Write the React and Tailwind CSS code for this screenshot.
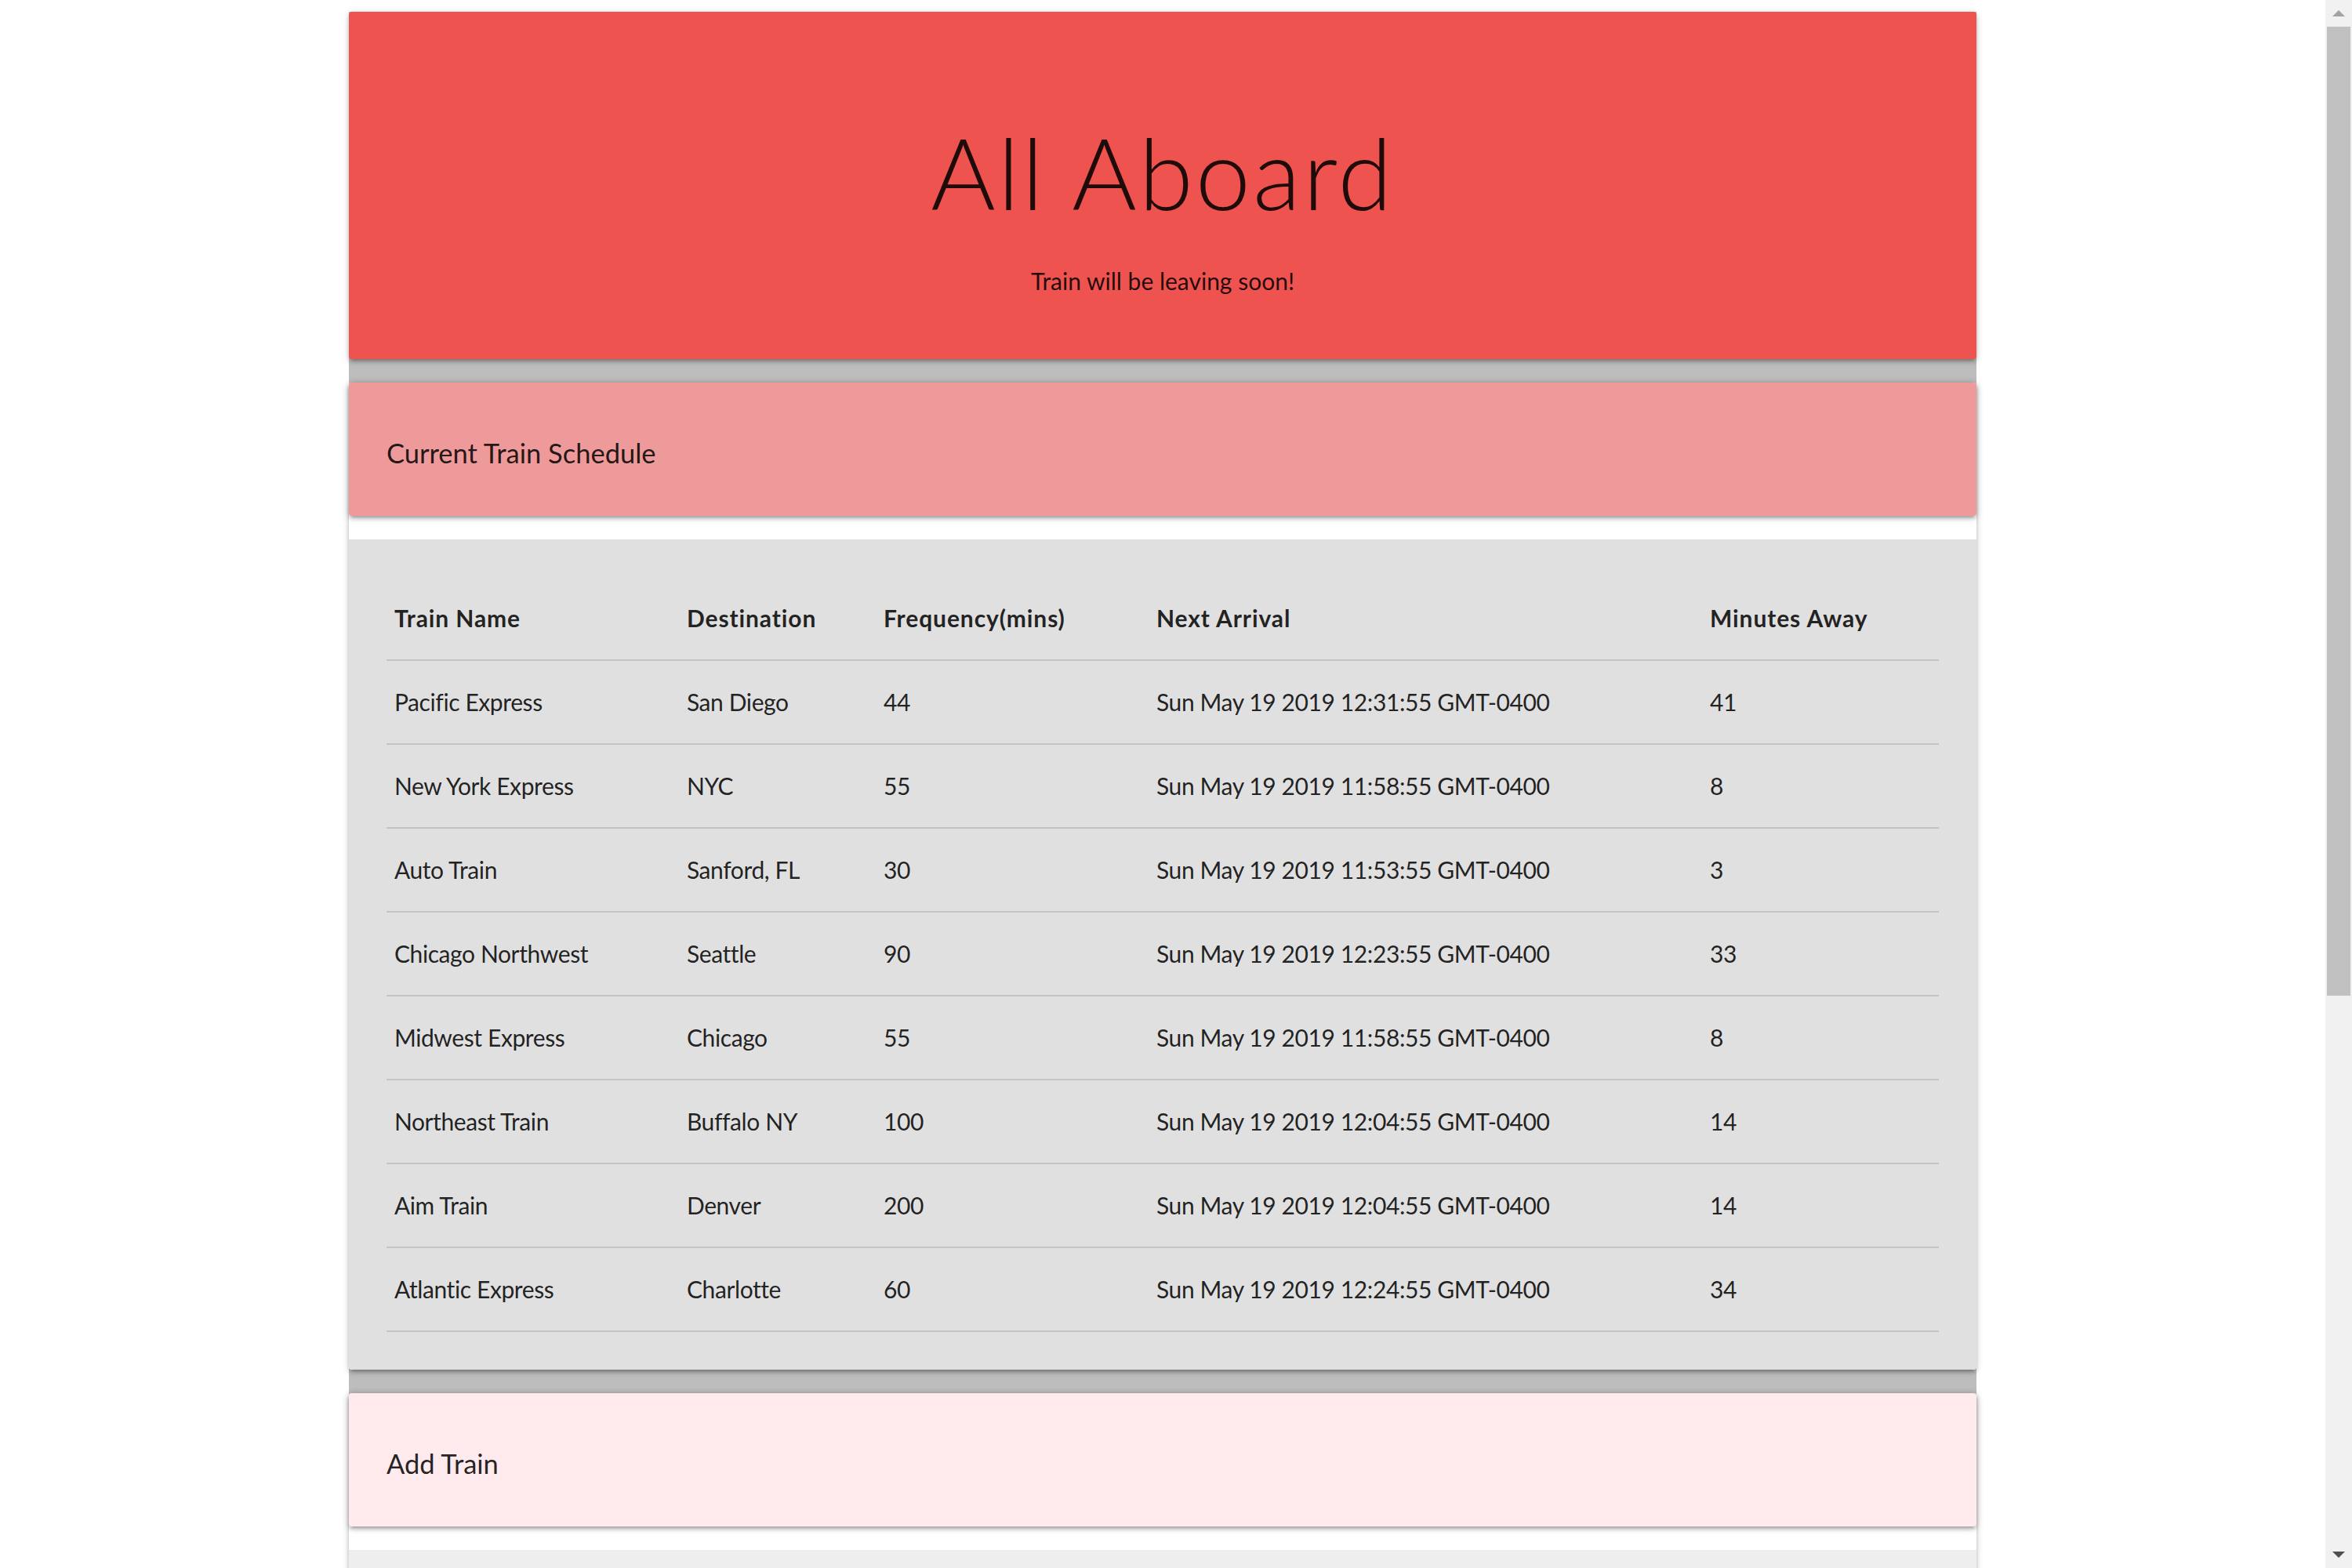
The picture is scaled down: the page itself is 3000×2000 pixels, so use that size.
import React from 'react';

// Materialize-like look, drawn at 2x
const CARD_SHADOW =
  'shadow-[0_4px_4px_0_rgba(0,0,0,0.14),0_6px_2px_-4px_rgba(0,0,0,0.12),0_2px_10px_0_rgba(0,0,0,0.2)]';

const TRAINS = [
  { name: 'Pacific Express', dest: 'San Diego', freq: '44', next: 'Sun May 19 2019 12:31:55 GMT-0400', away: '41' },
  { name: 'New York Express', dest: 'NYC', freq: '55', next: 'Sun May 19 2019 11:58:55 GMT-0400', away: '8' },
  { name: 'Auto Train', dest: 'Sanford, FL', freq: '30', next: 'Sun May 19 2019 11:53:55 GMT-0400', away: '3' },
  { name: 'Chicago Northwest', dest: 'Seattle', freq: '90', next: 'Sun May 19 2019 12:23:55 GMT-0400', away: '33' },
  { name: 'Midwest Express', dest: 'Chicago', freq: '55', next: 'Sun May 19 2019 11:58:55 GMT-0400', away: '8' },
  { name: 'Northeast Train', dest: 'Buffalo NY', freq: '100', next: 'Sun May 19 2019 12:04:55 GMT-0400', away: '14' },
  { name: 'Aim Train', dest: 'Denver', freq: '200', next: 'Sun May 19 2019 12:04:55 GMT-0400', away: '14' },
  { name: 'Atlantic Express', dest: 'Charlotte', freq: '60', next: 'Sun May 19 2019 12:24:55 GMT-0400', away: '34' },
];

const cell = 'px-[10px] py-[30px] leading-[45px] text-left';
const th = `${cell} font-bold tracking-[0.9px]`;
const td = `${cell} tracking-[-0.4px]`;

const TitleCard = ({ bg, children }) => (
  <div className={`relative z-10 rounded-[4px] ${bg} ${CARD_SHADOW} px-[48px] pt-[48px] pb-[48px] mb-[30px]`}>
    <h6 className="mt-[23px] mb-[13px] text-[34.5px] leading-[38px]">{children}</h6>
  </div>
);

const Scrollbar = () => (
  <div className="flex flex-col w-[34px] h-full bg-[#f1f1f1]">
    <div className="h-[34px] flex items-center justify-center">
      <svg width="16" height="8" viewBox="0 0 16 8">
        <polygon points="0,8 8,0 16,8" fill="#a3a3a3" />
      </svg>
    </div>
    <div className="flex-1 px-[2px]">
      <div className="h-[1236px] bg-[#c1c1c1]" />
    </div>
    <div className="h-[34px] flex items-center justify-center">
      <svg width="16" height="8" viewBox="0 0 16 8">
        <polygon points="0,0 16,0 8,8" fill="#505050" />
      </svg>
    </div>
  </div>
);

export default function App() {
  return (
    <div className="flex w-[3000px] h-[2000px] overflow-hidden bg-white font-['Lato','Open_Sans',sans-serif] text-[rgba(0,0,0,0.87)] text-[30px] leading-[45px]">
      <div className="flex-1">
        {/* page container, grey shows in the gaps between cards */}
        <div className="w-[70%] mx-auto mt-[15px] bg-[#bdbdbd] flex flex-col gap-[30px]">
          {/* Header */}
          <div className={`relative z-10 rounded-[4px] bg-[#ef5350] ${CARD_SHADOW} pt-[48px] pb-[77px] text-center`}>
            <h1 className="mt-[87px] text-[126px] leading-[139px] font-light tracking-[3px]">All Aboard</h1>
            <p className="mt-[47px]">Train will be leaving soon!</p>
          </div>

          {/* Schedule */}
          <div className={`relative rounded-[4px] bg-white ${CARD_SHADOW}`}>
            <TitleCard bg="bg-[#ef9a9a]">Current Train Schedule</TitleCard>
            <div className="bg-[#e0e0e0] p-[48px] rounded-b-[4px]">
              <table className="w-full table-fixed">
                <colgroup>
                  <col className="w-[373px]" />
                  <col className="w-[251px]" />
                  <col className="w-[348px]" />
                  <col className="w-[706px]" />
                  <col className="w-[302px]" />
                </colgroup>
                <thead>
                  <tr className="border-b-2 border-[rgba(0,0,0,0.12)]">
                    <th className={th}>Train Name</th>
                    <th className={th}>Destination</th>
                    <th className={th}>Frequency(mins)</th>
                    <th className={th}>Next Arrival</th>
                    <th className={th}>Minutes Away</th>
                  </tr>
                </thead>
                <tbody>
                  {TRAINS.map((t) => (
                    <tr key={t.name} className="border-b-2 border-[rgba(0,0,0,0.12)]">
                      <td className={td}>{t.name}</td>
                      <td className={td}>{t.dest}</td>
                      <td className={td}>{t.freq}</td>
                      <td className={td}>{t.next}</td>
                      <td className={td}>{t.away}</td>
                    </tr>
                  ))}
                </tbody>
              </table>
            </div>
          </div>

          {/* Add train */}
          <div className={`relative rounded-[4px] bg-white ${CARD_SHADOW}`}>
            <TitleCard bg="bg-[#ffebee]">Add Train</TitleCard>
            <div className="bg-[#eeeeee] h-[600px]" />
          </div>
        </div>
      </div>
      <Scrollbar />
    </div>
  );
}
